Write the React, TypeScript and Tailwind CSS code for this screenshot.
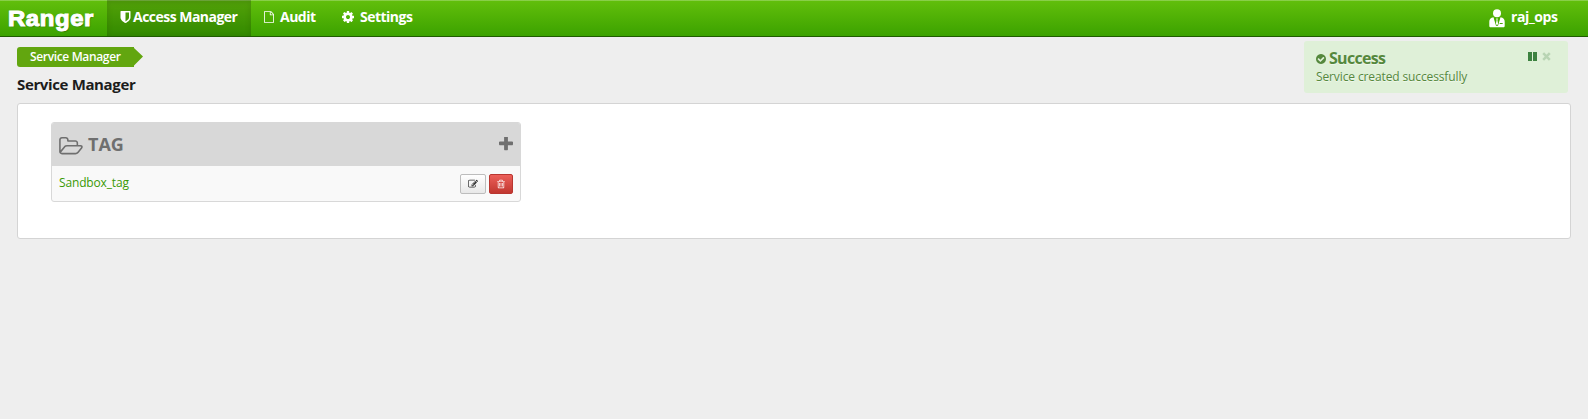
import React from "react";

const ICONS = {
  shield:
    "M1344 960v-640h-448v1137q119-63 213-137 235-184 235-360zm192-768v768q0 86-33.500 170.500t-83 150-118 127.500-126.500 103-121 77.500-89.500 49.500-42.500 20q-12 6-26 6t-26-6q-16-7-42.500-20t-89.500-49.500-121-77.500-126.500-103-118-127.500-83-150-33.500-170.500v-768q0-26 19-45t45-19h1152q26 0 45 19t19 45z",
  file:
    "M1596 380q28 28 48 76t20 88v1152q0 40-28 68t-68 28h-1344q-40 0-68-28t-28-68v-1600q0-40 28-68t68-28h896q40 0 88 20t76 48zm-444-244v376h376q-10-29-22-41l-313-313q-12-12-41-22zm384 1528v-1024h-416q-40 0-68-28t-28-68v-416h-768v1536h1280z",
  cog:
    "M1152 896q0-106-75-181t-181-75-181 75-75 181 75 181 181 75 181-75 75-181zm512-109v222q0 12-8 23t-20 13l-185 28q-19 54-39 91 35 50 107 138 10 12 10 25t-9 23q-27 37-99 108t-94 71q-12 0-26-9l-138-108q-44 23-91 38-16 136-29 186-7 28-36 28h-222q-14 0-24.500-8.500t-11.500-21.500l-28-184q-49-16-90-37l-141 107q-10 9-25 9-14 0-25-11-126-114-165-168-7-10-7-23 0-12 8-23 15-21 51-66.500t54-70.500q-27-50-41-99l-183-27q-13-2-21-12.500t-8-23.500v-222q0-12 8-23t19-13l186-28q14-46 39-92-40-57-107-138-10-12-10-24 0-10 9-23 26-36 98.500-107.500t94.500-71.500q13 0 26 10l138 107q44-23 91-38 16-136 29-186 7-28 36-28h222q14 0 24.500 8.500t11.500 21.500l28 184q49 16 90 37l142-107q9-9 24-9 13 0 25 10 129 119 165 170 7 8 7 22 0 12-8 23-15 21-51 66.500t-54 70.500q26 50 41 98l183 28q13 2 21 12.500t8 23.500z",
  folder:
    "M1845 931q0-35-53-35h-1088q-40 0-85.500 21.500t-71.500 52.500l-294 363q-18 24-18 40 0 35 53 35h1088q40 0 86-22t71-53l294-363q18-22 18-39zm-1141-163h768v-160q0-40-28-68t-68-28h-576q-40 0-68-28t-28-68v-64q0-40-28-68t-68-28h-320q-40 0-68 28t-28 68v853l256-315q44-53 116-87.500t140-34.500zm1269 163q0 62-46 120l-295 363q-43 53-116 87.500t-140 34.500h-1088q-92 0-158-66t-66-158v-960q0-92 66-158t158-66h320q92 0 158 66t66 158v32h544q92 0 158 66t66 158v160h192q54 0 99 24.500t67 70.500q15 32 15 68z",
  plus:
    "M1600 736v192q0 40-28 68t-68 28h-416v416q0 40-28 68t-68 28h-192q-40 0-68-28t-28-68v-416h-416q-40 0-68-28t-28-68v-192q0-40 28-68t68-28h416v-416q0-40 28-68t68-28h192q40 0 68 28t28 68v416h416q40 0 68 28t28 68z",
  edit:
    "M888 1184l116-116-152-152-116 116v56h96v96h56zm440-720q-16-16-33 1l-350 350q-17 17-1 33t33-1l350-350q17-17 1-33zm80 594v190q0 119-84.500 203.500t-203.500 84.500h-832q-119 0-203.500-84.500t-84.500-203.500v-832q0-119 84.500-203.500t203.500-84.500h832q63 0 117 25 15 7 18 23 3 17-9 29l-49 49q-14 14-32 8-23-6-45-6h-832q-66 0-113 47t-47 113v832q0 66 47 113t113 47h832q66 0 113-47t47-113v-126q0-13 9-22l64-64q15-15 35-7t20 29zm-96-738l288 288-672 672h-288v-288zm444 132l-92 92-288-288 92-92q28-28 68-28t68 28l152 152q28 28 28 68t-28 68z",
  trash:
    "M704 736v576q0 14-9 23t-23 9h-64q-14 0-23-9t-9-23v-576q0-14 9-23t23-9h64q14 0 23 9t9 23zm256 0v576q0 14-9 23t-23 9h-64q-14 0-23-9t-9-23v-576q0-14 9-23t23-9h64q14 0 23 9t9 23zm256 0v576q0 14-9 23t-23 9h-64q-14 0-23-9t-9-23v-576q0-14 9-23t23-9h64q14 0 23 9t9 23zm128 724v-948h-896v948q0 22 7 40.500t14.500 27 10.500 8.500h832q3 0 10.500-8.500t14.500-27 7-40.500zm-672-1076h448l-48-117q-7-9-17-11h-317q-10 2-17 11zm928 32v64q0 14-9 23t-23 9h-96v948q0 83-47 143.500t-113 60.500h-832q-66 0-113-58.500t-47-141.500v-952h-96q-14 0-23-9t-9-23v-64q0-14 9-23t23-9h309l70-167q15-37 54-63t79-26h320q40 0 79 26t54 63l70 167h309q14 0 23 9t9 23z",
  check:
    "M1412 734q0-28-18-46l-91-90q-19-19-45-19t-45 19l-408 407-226-226q-19-19-45-19t-45 19l-91 90q-18 18-18 46 0 27 18 45l362 362q19 19 45 19 27 0 46-19l543-543q18-18 18-45zm252 162q0 209-103 385.500t-279.500 279.500-385.500 103-385.500-103-279.500-279.500-103-385.500 103-385.500 279.500-279.500 385.500-103 385.500 103 279.500 279.500 103 385.500z",
};

function Icon({
  name,
  box = "0 0 1792 1792",
  className,
}: {
  name: keyof typeof ICONS;
  box?: string;
  className: string;
}) {
  return (
    <svg viewBox={box} className={`shrink-0 fill-current ${className}`} aria-hidden="true">
      <path d={ICONS[name]} />
    </svg>
  );
}

function Header() {
  return (
    <header className="flex h-[37px] border-b border-[#1f5c00] bg-linear-to-b from-[#62bf0c] to-[#3ba200] text-[14px] font-bold tracking-[-0.52px] text-white shadow-[inset_0_1px_0_rgba(255,255,255,0.25)]">
      <div className="w-[107px] pt-px pl-2">
        <span className="block w-fit origin-left scale-x-[1.09] font-['Liberation_Sans',sans-serif] text-[22px] leading-[35px] tracking-[0.5px] [-webkit-text-stroke:1px_white] [text-shadow:1px_1px_1px_rgba(0,0,0,0.3)]">
          Ranger
        </span>
      </div>
      <nav className="flex leading-[34px]">
        <a className="flex w-36 bg-black/15 pl-[13px] shadow-[inset_0_2px_6px_rgba(0,0,0,0.12)]">
          <Icon name="shield" box="256 0 1280 1792" className="mt-[10px] mr-[2px] h-[14px] w-[11px]" />
          <span className="whitespace-nowrap">Access Manager</span>
        </a>
        <a className="flex w-[78px] pl-[13px]">
          <Icon name="file" box="128 0 1536 1792" className="mt-[11px] mr-[6px] h-3 w-[10px]" />
          Audit
        </a>
        <a className="flex pl-[13px]">
          <Icon name="cog" box="128 128 1536 1536" className="mt-[11px] mr-[6px] h-3 w-3" />
          Settings
        </a>
      </nav>
      <div className="ml-auto flex w-[99px] leading-[34px] tracking-[-0.4px]">
        <svg viewBox="0 0 16 19" className="mt-[9px] mr-[6px] h-[19px] w-4 shrink-0" aria-hidden="true">
          <circle cx="8" cy="4.200" r="4" fill="#fff" />
          <path d="M4.500 8.300 7 16.800h2l2.500-8.500c2.900.3 4.200 1.900 4.200 4.500v4.100c0 .9-.6 1.400-1.500 1.400H1.800c-.9 0-1.500-.5-1.500-1.400v-4.100c0-2.600 1.300-4.200 4.200-4.500Z" fill="#fff" />
          <path d="m5 8.500 2.500 8.300h1L11 8.500 8.700 10H7.300Z" fill="#47aa02" />
          <path d="m7.200 9.700.8-.5.800.5-.4 1.200.7 3.900L8 16.500l-1.100-1.700.7-3.900Z" fill="#fff" />
          <path d="M10.700 14.500h3" stroke="#47aa02" />
        </svg>
        raj_ops
      </div>
    </header>
  );
}

function Toast() {
  return (
    <div className="absolute top-[41px] left-[1304px] flex h-[52px] w-[264px] justify-between rounded-[3px] bg-[#dff0d8] pl-3 text-[#55883d] [text-shadow:0_1px_0_rgba(255,255,255,0.5)]">
      <div>
        <div className="flex pt-[6px] text-[16px] leading-[22px] font-bold tracking-[-0.7px]">
          <Icon name="check" box="128 128 1536 1536" className="mt-[7px] mr-[3px] h-[10px] w-[10px]" />
          Success
        </div>
        <div className="text-[12px] leading-[15px] tracking-[-0.12px] whitespace-nowrap">Service created successfully</div>
      </div>
      <div className="flex gap-[5px] pt-[11px] pr-[17px]">
        <svg viewBox="0 0 9 9" className="h-[9px] w-[9px]" aria-hidden="true">
          <path d="M0 0h4v9H0zM5 0h4v9H5z" fill="#3d8240" />
        </svg>
        <svg viewBox="0 0 9 9" className="h-[9px] w-[9px]" aria-hidden="true">
          <path d="m1.200 1.200 6.600 6.600m0-6.600L1.200 7.800" stroke="#b8d4b3" strokeWidth="2.500" />
        </svg>
      </div>
    </div>
  );
}

function ServiceCard() {
  return (
    <section className="h-[80px] w-[470px] overflow-hidden rounded-[3px] border border-[#d8d8d8] bg-[#f9f9f9]">
      <div className="flex h-[43px] bg-[#d8d8d8] pl-[7px] text-[18px] leading-[43px] font-bold text-[#6f6f6f]">
        <Icon name="folder" box="64 128 1920 1536" className="mt-[14px] mr-[5px] h-[19px] w-6" />
        TAG
        <Icon name="plus" box="192 192 1408 1408" className="mt-[14px] mr-[7px] ml-auto h-[14px] w-[14px]" />
      </div>
      <div className="flex h-[35px] pl-[7px] text-[12px] leading-[33px] tracking-[-0.15px] text-[#3a9a05]">
        <a>Sandbox_tag</a>
        <button className="mt-[8px] ml-auto flex h-5 w-[26px] items-center justify-center rounded-[2px] border border-[#bdbdbd] bg-linear-to-b from-white to-[#e8e8e8] text-[#333]">
          <Icon name="edit" className="h-[10px] w-[10px]" />
        </button>
        <button className="mt-[8px] mr-[7px] ml-[3px] flex h-5 w-6 items-center justify-center rounded-[2px] border border-[#b93630] bg-linear-to-b from-[#ec5f59] to-[#c13730] text-white">
          <Icon name="trash" className="h-[10px] w-[10px]" />
        </button>
      </div>
    </section>
  );
}

export default function App() {
  return (
    <div className="relative h-[419px] w-[1588px] overflow-hidden bg-[#eee] font-['Open_Sans',sans-serif]">
      <Header />
      <main className="px-[17px] pt-[10px]">
        <div className="flex">
          <div className="h-5 w-[117px] rounded-l-[3px] bg-[#62a60f] pl-[13px] text-[12px] leading-[19px] font-semibold tracking-[-0.35px] whitespace-nowrap text-white">
            Service Manager
          </div>
          <svg viewBox="0 0 9 20" className="h-5 w-[9px]" aria-hidden="true">
            <path d="M0 0v1l9 8.500L0 18.500Z" fill="#62a60f" />
          </svg>
        </div>
        <h1 className="mt-[7px] h-[29px] text-[15px] leading-5 font-bold tracking-[-0.36px] text-[#1c1c1c]">Service Manager</h1>
        <div className="h-[136px] w-[1554px] rounded-[3px] border border-[#d4d4d4] bg-white pt-[18px] pl-[33px]">
          <ServiceCard />
        </div>
      </main>
      <Toast />
    </div>
  );
}
